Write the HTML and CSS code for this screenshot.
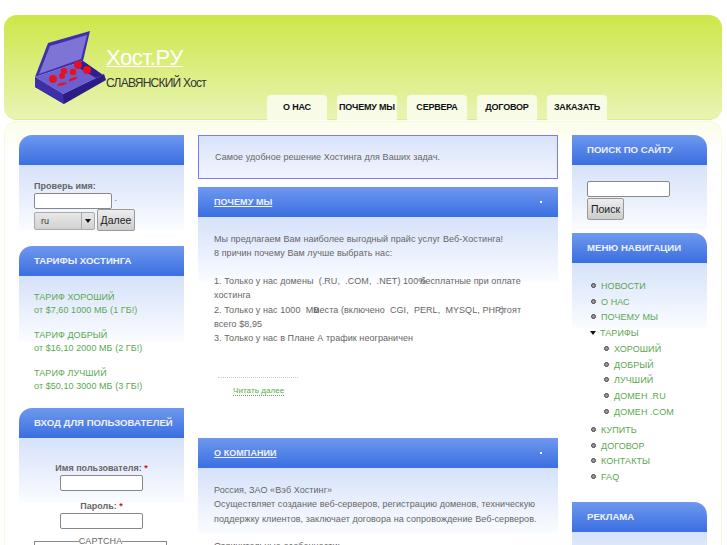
FILE: index.html
```html
<!DOCTYPE html>
<html lang="ru">
<head>
    <meta charset="UTF-8">
    <title>Хост.РУ</title>
    <link rel="stylesheet" href="styles.css">
</head>
<body>
    <div class="header">
        <svg class="logo" width="76" height="78" viewBox="0 0 76 78">
            <polygon points="5,49 33,66 74,46 76,52 34,76 5,59" fill="#2c1c86"/>
            <polygon points="5,49 33,66 34,76 5,59" fill="#3d2fa8"/>
            <polygon points="18,15 60,3 53,33 5,49" fill="#3f2fae"/>
            <polygon points="20,18 57,7 51,31 9,46" fill="#7d74d6"/>
            <polygon points="5,49 53,33 73,47 33,66" fill="#6c60d0"/>
            <polygon points="53,33 73,47 66,50 44,37" fill="#2e2092"/>
            <g fill="#e8101c">
                <circle cx="23" cy="51" r="4"/>
                <circle cx="32" cy="48" r="3"/>
                <circle cx="34" cy="43" r="3.3"/>
                <circle cx="43" cy="44" r="3.3"/>
                <circle cx="48" cy="37" r="4"/>
                <circle cx="57" cy="42" r="4"/>
                <ellipse cx="32" cy="56" rx="5" ry="1.2" transform="rotate(-15 32 56)"/>
                <ellipse cx="43" cy="51" rx="4.5" ry="1.4" transform="rotate(-20 43 51)"/>
            </g>
        </svg>
        <div class="brand">
            <a class="brand-name" href="#">Хост.РУ</a>
            <div class="brand-sub">СЛАВЯНСКИЙ Хост</div>
        </div>
        <div class="tabs">
            <a class="tab" href="#">О НАС</a>
            <a class="tab" href="#">ПОЧЕМУ МЫ</a>
            <a class="tab" href="#">СЕРВЕРА</a>
            <a class="tab" href="#">ДОГОВОР</a>
            <a class="tab" href="#">ЗАКАЗАТЬ</a>
        </div>
    </div>

    <div class="wrapper">
        <div class="col-left">
            <div class="block block-left">
                <div class="block-head"></div>
                <div class="block-body domain">
                    <label class="label">Проверь имя:</label>
                    <div><input type="text" class="input domain-input"> .</div>
                    <div class="domain-row">
                        <span class="fake-select">ru<span class="fake-arrow"></span></span>
                        <button class="btn">Далее</button>
                    </div>
                </div>
            </div>

            <div class="block block-left">
                <div class="block-head">ТАРИФЫ ХОСТИНГА</div>
                <div class="block-body tariffs">
                    <p><a href="#">ТАРИФ ХОРОШИЙ</a><br>от $7,60 1000 МБ (1 ГБ!)</p>
                    <p><a href="#">ТАРИФ ДОБРЫЙ</a><br>от $16,10 2000 МБ (2 ГБ!)</p>
                    <p><a href="#">ТАРИФ ЛУЧШИЙ</a><br>от $50,10 3000 МБ (3 ГБ!)</p>
                </div>
            </div>

            <div class="block block-left">
                <div class="block-head">ВХОД ДЛЯ ПОЛЬЗОВАТЕЛЕЙ</div>
                <div class="block-body login">
                    <label class="label">Имя пользователя: <span class="req">*</span></label>
                    <input type="text" class="input login-input">
                    <label class="label">Пароль: <span class="req">*</span></label>
                    <input type="password" class="input login-input">
                    <fieldset class="captcha"><legend>CAPTCHA</legend></fieldset>
                </div>
            </div>
        </div>

        <div class="col-main">
            <div class="intro">Самое удобное решение Хостинга для Ваших задач.</div>

            <div class="post post-first">
                <div class="post-head"><a href="#">ПОЧЕМУ МЫ</a><span class="post-dot"></span></div>
                <div class="post-body">
                    <p>Мы предлагаем Вам наиболее выгодный прайс услуг Веб-Хостинга!<br>
                    8 причин почему Вам лучше выбрать нас:</p>
                    <p>1. Только у нас домены &nbsp;(.RU, &nbsp;.COM, &nbsp;.NET) 100%<span class="squeeze">бесплатные при оплате</span> хостинга<br>
                    2. Только у нас 1000 &nbsp;MB<span class="squeeze">места (включено &nbsp;CGI, &nbsp;PERL, &nbsp;MYSQL, PHP)</span><span class="squeeze">стоят</span> всего $8,95<br>
                    3. Только у нас в Плане А трафик неограничен</p>
                    <div class="more"><a href="#">Читать далее</a></div>
                </div>
            </div>

            <div class="post">
                <div class="post-head"><a href="#">О КОМПАНИИ</a><span class="post-dot"></span></div>
                <div class="post-body">
                    <p>Россия, ЗАО «Вэб Хостинг»<br>
                    Осуществляет создание веб-серверов, регистрацию доменов, техническую поддержку клиентов, заключает договора на сопровождение Веб-серверов.</p>
                    <p>Отличительные особенности:</p>
                </div>
            </div>
        </div>

        <div class="col-right">
            <div class="block block-right">
                <div class="block-head">ПОИСК ПО САЙТУ</div>
                <div class="block-body search">
                    <input type="text" class="input search-input">
                    <button class="btn">Поиск</button>
                </div>
            </div>

            <div class="block block-right">
                <div class="block-head">МЕНЮ НАВИГАЦИИ</div>
                <div class="block-body nav">
                    <ul>
                        <li><a href="#">НОВОСТИ</a></li>
                        <li><a href="#">О НАС</a></li>
                        <li><a href="#">ПОЧЕМУ МЫ</a></li>
                        <li class="open"><a href="#">ТАРИФЫ</a>
                            <ul>
                                <li><a href="#">ХОРОШИЙ</a></li>
                                <li><a href="#">ДОБРЫЙ</a></li>
                                <li><a href="#">ЛУЧШИЙ</a></li>
                                <li><a href="#">ДОМЕН .RU</a></li>
                                <li><a href="#">ДОМЕН .COM</a></li>
                            </ul>
                        </li>
                        <li><a href="#">КУПИТЬ</a></li>
                        <li><a href="#">ДОГОВОР</a></li>
                        <li><a href="#">КОНТАКТЫ</a></li>
                        <li><a href="#">FAQ</a></li>
                    </ul>
                </div>
            </div>

            <div class="block block-right">
                <div class="block-head">РЕКЛАМА</div>
                <div class="block-body"></div>
            </div>
        </div>
    </div>
</body>
</html>
```

FILE: styles.css
```css
html, body {
    height: 545px;
    overflow: hidden;
}

body {
    margin: 0;
    padding: 15px 5px 0 4px;
    background-color: #fff;
    font-family: "Liberation Sans", Arial, sans-serif;
    font-size: 9px;
    letter-spacing: 0.07px;
    color: #666;
}

a {
    color: #5aa84f;
    text-decoration: none;
}

/* header */
.header {
    display: flex;
    height: 104px;
    border-bottom: 1px solid #dcec8c;
    border-radius: 13px;
    background: linear-gradient(#cde748, #e9f4b4);
}

.logo {
    margin: 13px 0 0 26px;
    flex: none;
}

.brand {
    width: 161px;
    padding-top: 31px;
}

.brand-name {
    display: block;
    font-size: 22px;
    line-height: 24px;
    letter-spacing: -0.4px;
    color: #fff;
    text-decoration: underline;
    text-decoration-thickness: 1px;
}

.brand-sub {
    margin-top: 6px;
    font-size: 12px;
    line-height: 14px;
    letter-spacing: -0.75px;
    white-space: nowrap;
    color: #333;
}

.tabs {
    display: flex;
    align-items: flex-end;
    gap: 10px;
    height: 105px;
}

.tab {
    width: 60px;
    height: 25px;
    border-radius: 4px 4px 0 0;
    background-color: #f8fbe6;
    font-size: 9px;
    font-weight: bold;
    letter-spacing: -0.2px;
    line-height: 25px;
    text-align: center;
    white-space: nowrap;
    color: #111;
}

/* three columns */
.wrapper {
    display: flex;
    gap: 14px;
    height: 420px;
    margin-top: 1px;
    padding: 13px 14px 0;
    border: 1px solid #f6f9e2;
    border-bottom: none;
    border-radius: 13px 13px 0 0;
    background: linear-gradient(#fdfdea, #fff 30px);
}

.col-left {
    width: 165px;
    flex: none;
}

.col-main {
    width: 360px;
    flex: none;
}

.col-right {
    width: 135px;
    flex: none;
}

/* side blocks */
.block-head {
    height: 30px;
    background: linear-gradient(#6f98ef, #3a6fe0);
    font-size: 9.6px;
    font-weight: bold;
    letter-spacing: 0;
    line-height: 29px;
    padding-left: 15px;
    white-space: nowrap;
    color: #eef2fd;
}

.block-left .block-head {
    border-top-left-radius: 13px;
}

.block-right .block-head {
    border-top-right-radius: 13px;
}

.block-body {
    padding: 15px 15px 0;
    background: linear-gradient(#d6e2fa, #fafcff) no-repeat;
    background-size: 100% 65px;
}

.label {
    display: block;
    font-weight: bold;
    letter-spacing: 0;
    line-height: 13px;
    color: #666;
}

.input {
    box-sizing: border-box;
    height: 16px;
    padding: 0 2px;
    border: 1px solid #888;
    border-radius: 2px;
    background-color: #fff;
    vertical-align: top;
}

.btn {
    height: 22px;
    padding: 0;
    border: 1px solid #999;
    border-radius: 2px;
    background: linear-gradient(#eee, #ccc);
    font-family: "Liberation Sans", Arial, sans-serif;
    font-size: 10.5px;
    color: #222;
}

/* domain check */
.domain {
    box-sizing: border-box;
    height: 66px;
    margin-bottom: 15px;
}

.domain-input {
    width: 78px;
}

.domain-row {
    display: flex;
    gap: 2px;
}

.fake-select {
    display: flex;
    justify-content: space-between;
    align-items: center;
    box-sizing: border-box;
    width: 61px;
    height: 18px;
    margin-top: 3px;
    padding-left: 6px;
    border: 1px solid #aaa;
    border-radius: 2px;
    background: linear-gradient(#e8e8e8, #d2d2d2);
    color: #333;
}

.fake-arrow {
    position: relative;
    width: 12px;
    height: 16px;
    border-left: 1px solid #aaa;
}

.fake-arrow::after {
    content: "";
    position: absolute;
    top: 6px;
    left: 3px;
    border: 3px solid transparent;
    border-top: 4px solid #111;
}

.domain .btn {
    width: 38px;
}

/* tariffs */
.tariffs {
    height: 117px;
}

.tariffs p {
    margin: 0 0 12px;
    line-height: 13px;
    color: #5aa84f;
}

/* login */
.login {
    padding-top: 24px;
    text-align: center;
}

.req {
    color: #e01010;
}

.login-input {
    display: block;
    width: 83px;
    margin: 0 auto 9px;
}

.captcha {
    box-sizing: border-box;
    width: 133px;
    height: 40px;
    margin: -2px 0 0;
    padding: 0;
    border: 1px solid #888;
}

.captcha legend {
    margin: 0 auto;
    padding: 0;
    font-size: 9px;
}

/* main column */
.intro {
    height: 44px;
    box-sizing: border-box;
    border: 1px solid #7a7aff;
    background: linear-gradient(#d8e3fa, #f2f5fe);
    padding-left: 16px;
    line-height: 42px;
}

.post-first {
    margin-top: 8px;
    height: 251px;
}

.post-head {
    display: flex;
    justify-content: space-between;
    align-items: center;
    height: 30px;
    padding: 0 16px 0 16px;
    background: linear-gradient(#6f98ef, #3a6fe0);
    font-weight: bold;
}

.post-head a {
    color: #eef2fd;
    text-decoration: underline;
}

.post-dot {
    width: 2px;
    height: 2px;
    background-color: #fff;
}

.post-body {
    padding: 15px 14px 0 16px;
    background: linear-gradient(#d6e2fa, #fafcff) no-repeat;
    background-size: 100% 65px;
    line-height: 14.4px;
}

.post-body p {
    margin: 0 0 13px;
}

.squeeze {
    margin-left: -6px;
}

.more {
    width: 80px;
    margin: 31px 0 0 4px;
    padding: 6px 0 0 15px;
    box-sizing: border-box;
    border-top: 1px dotted #ccc;
    font-size: 8px;
    white-space: nowrap;
}

.more a {
    border-bottom: 1px dotted #5aa84f;
}

/* right column */
.search {
    height: 52px;
    padding-top: 16px;
}

.search-input {
    display: block;
    width: 83px;
}

.search .btn {
    display: block;
    width: 37px;
    margin-top: 1px;
}

.nav {
    height: 223px;
    padding: 16px 0 0;
}

.nav ul {
    margin: 0;
    padding: 0 0 0 29px;
    list-style: none;
}

.nav ul ul {
    margin-bottom: 2.5px;
    padding-left: 13px;
}

.nav li {
    line-height: 15.7px;
}

.nav li::before {
    content: "";
    display: inline-block;
    box-sizing: border-box;
    width: 5px;
    height: 5px;
    margin: 0 5px 1px -10px;
    border: 1.5px solid #444;
    border-radius: 50%;
    background-color: #999;
}

.nav .open::before {
    width: 0;
    height: 0;
    margin: 0 4px 1px -11px;
    border: 3.5px solid transparent;
    border-top: 4px solid #111;
    border-bottom: none;
    border-radius: 0;
    background: none;
}
```
